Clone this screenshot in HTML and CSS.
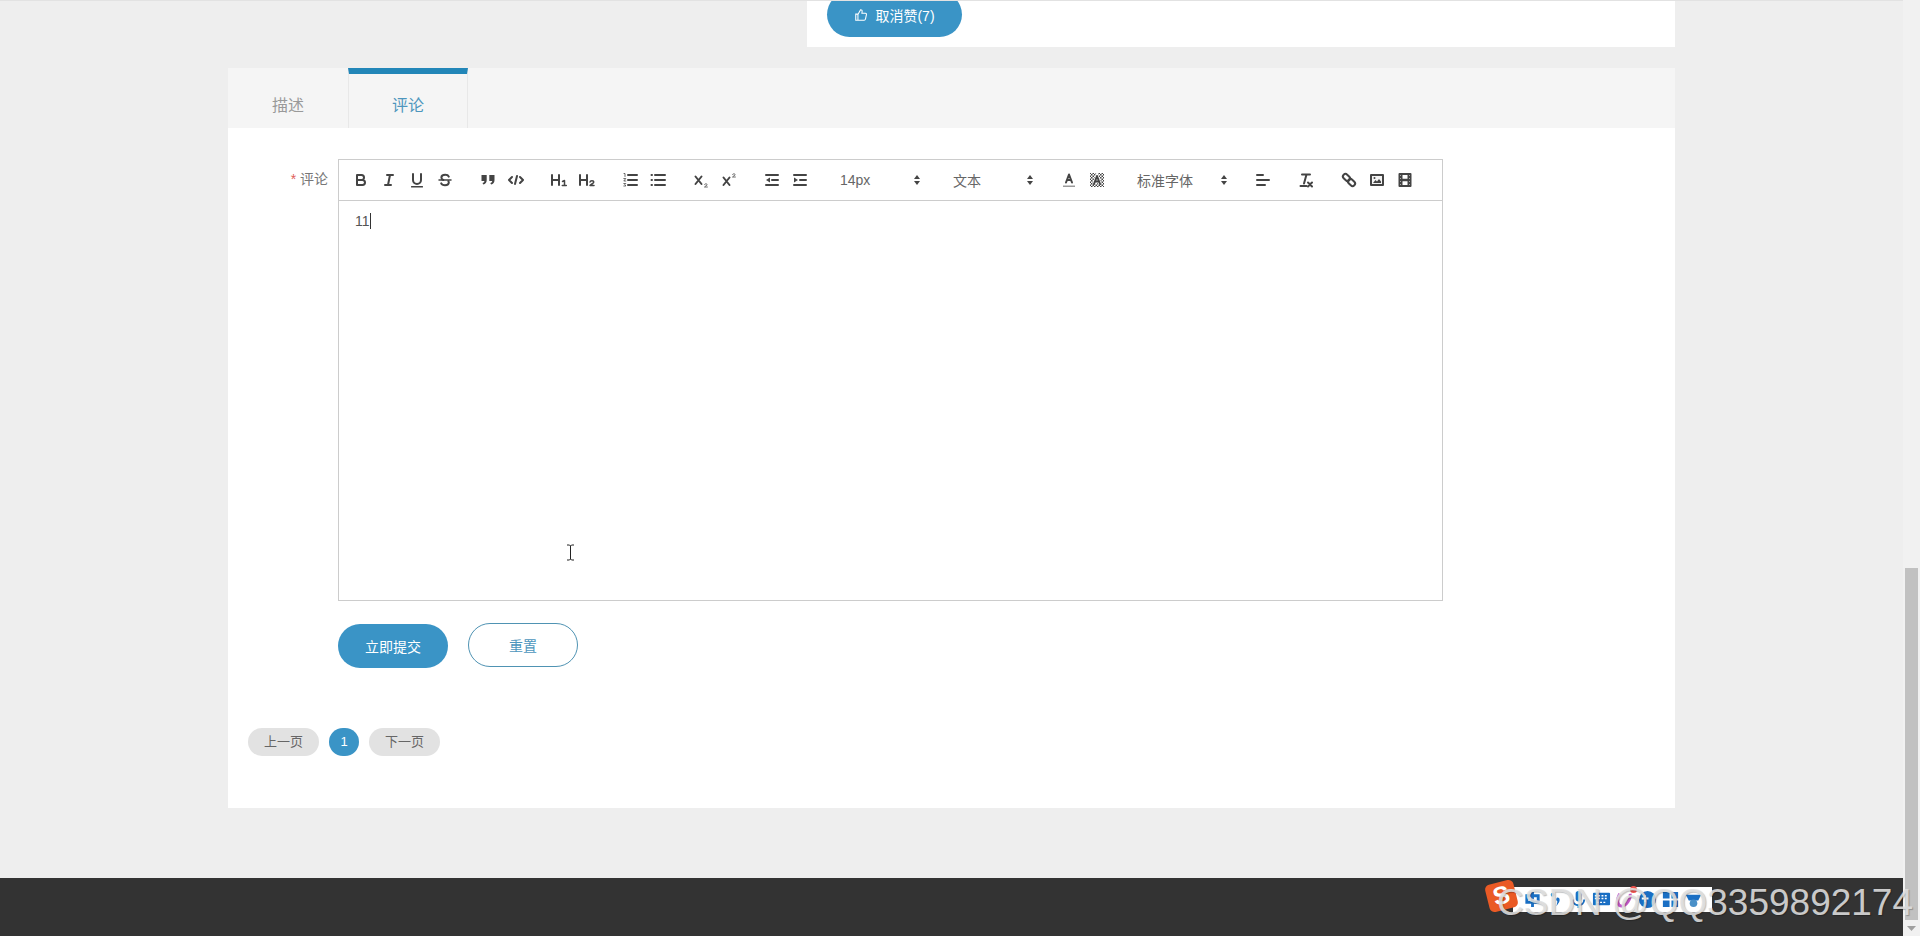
FILE: index.html
```html
<!DOCTYPE html>
<html>
<head>
    <title>评论</title>
    <link rel="stylesheet" href="styles.css">
</head>
<body>
    <div class="page">
        <div class="main">
            <div class="content">
                <div class="wrap">
                    <div class="like-panel">
                        <button class="like-btn">
                            <svg class="like-icon" viewBox="0 0 16 16" width="14" height="14"><path d="M2 7h2.500v7H2zM4.500 7.500 7.500 2c1.200 0 2 .8 1.800 2L9 6h4c.9 0 1.400.7 1.200 1.600l-1.100 5.200c-.2.8-.7 1.200-1.500 1.200H4.500"/></svg>
                            取消赞(7)
                        </button>
                    </div>

                    <div class="tabs-panel">
                        <div class="tab-bar">
                            <div class="tab">描述</div>
                            <div class="tab tab-active">评论</div>
                        </div>
                        <div class="tab-body">
                            <div class="form-row">
                                <label class="form-label"><span class="star">*</span> 评论</label>
                                <div class="editor">
                                    <div class="toolbar">
                                        <span class="group">
                                            <span class="tool"><svg viewBox="0 0 18 18"><path class="st" d="M5 4h4.500a2.500 2.500 0 0 1 0 5H5zM5 9h5.500a2.500 2.500 0 0 1 0 5H5z"/></svg></span>
                                            <span class="tool"><svg viewBox="0 0 18 18"><path class="st" d="M7 4h6M5 14h6M8 14l2-10"/></svg></span>
                                            <span class="tool"><svg viewBox="0 0 18 18"><path class="st" d="M5 3v6a4 4 0 0 0 8 0V3"/><rect class="fi" x="3" y="15" width="12" height="1.400" rx=".5"/></svg></span>
                                            <span class="tool"><svg viewBox="0 0 18 18"><path class="st1" d="M3 9h12"/><path class="st" d="M12.800 5.600C12.300 4.400 11 3.800 9.200 3.800 7 3.800 5.400 4.800 5.400 6.500c0 1.200.7 2 1.900 2.500M5.200 12.400c.5 1.200 1.900 1.800 3.800 1.800 2.200 0 3.800-1 3.800-2.700 0-.6-.2-1.100-.5-1.500"/></svg></span>
                                        </span>
                                        <span class="group">
                                            <span class="tool"><svg viewBox="0 0 18 18"><path class="fi" d="M2.500 4h5.200v5.200c0 2.200-1.200 3.800-3.400 4.400l-.8-1.500c1.200-.5 1.800-1.200 1.900-2.100H2.500zM10.300 4h5.200v5.200c0 2.200-1.200 3.800-3.400 4.400l-.8-1.500c1.200-.5 1.800-1.200 1.900-2.100h-2.900z"/></svg></span>
                                            <span class="tool"><svg viewBox="0 0 18 18"><path class="st" d="M5 6 2 9l3 3M13 6l3 3-3 3M10 5 8 13"/></svg></span>
                                        </span>
                                        <span class="group">
                                            <span class="tool"><svg viewBox="0 0 18 18"><path class="st" d="M2 4v10M9 4v10M2 9h7"/><path class="st1" d="M12.500 10.500 14.500 9.500v5M12.300 14.500h4"/></svg></span>
                                            <span class="tool"><svg viewBox="0 0 18 18"><path class="st" d="M2 4v10M9 4v10M2 9h7"/><path class="st1" d="M12 11c.3-1.800 3.800-1.800 3.800.1 0 1.400-2.800 2-3.800 3.400h4"/></svg></span>
                                        </span>
                                        <span class="group">
                                            <span class="tool"><svg viewBox="0 0 18 18"><path class="st" d="M7 4h9M7 9h9M7 14h9"/><path class="st05" d="M3 2.500h1v3M2.800 7.500h2l-2 2.500h2M2.800 12.500h2l-1 1 1 1.500h-2"/></svg></span>
                                            <span class="tool"><svg viewBox="0 0 18 18"><path class="st" d="M6 4h10M6 9h10M6 14h10M2.500 4h.5M2.500 9h.5M2.500 14h.5"/></svg></span>
                                        </span>
                                        <span class="group">
                                            <span class="tool"><svg viewBox="0 0 18 18"><path class="st" d="m3.500 5.500 6 7.500M9.500 5.500l-6 7.500"/><path class="st05" d="M12.500 13.500c.2-1 2.600-1 2.600.2 0 1-1.800 1.200-2.600 2.300h2.900"/></svg></span>
                                            <span class="tool"><svg viewBox="0 0 18 18"><path class="st" d="m3.500 6.500 6 7.500M9.500 6.500l-6 7.500"/><path class="st05" d="M12.500 3.500c.2-1 2.600-1 2.600.2 0 1-1.800 1.200-2.600 2.300h2.900"/></svg></span>
                                        </span>
                                        <span class="group">
                                            <span class="tool"><svg viewBox="0 0 18 18"><path class="st" d="M3 4h12M9 9h6M3 14h12"/><path class="fi" d="M7 6.500v5L3 9z"/></svg></span>
                                            <span class="tool"><svg viewBox="0 0 18 18"><path class="st" d="M3 4h12M9 9h6M3 14h12"/><path class="fi" d="M3 6.500v5L7 9z"/></svg></span>
                                        </span>
                                        <span class="group">
                                            <span class="picker">14px<svg class="updown" viewBox="0 0 8 12"><path d="M4 1 7 5H1zM4 11 1 7h6z"/></svg></span>
                                        </span>
                                        <span class="group">
                                            <span class="picker">文本<svg class="updown" viewBox="0 0 8 12"><path d="M4 1 7 5H1zM4 11 1 7h6z"/></svg></span>
                                        </span>
                                        <span class="group">
                                            <span class="tool"><svg viewBox="0 0 18 18"><path class="st" d="M6 11.500 9 3.500l3 8M7 9h4"/><rect x="3" y="14.500" width="12" height="1.500" fill="#999"/></svg></span>
                                            <span class="tool"><svg viewBox="0 0 18 18"><defs><pattern id="hatch" width="3" height="3" patternUnits="userSpaceOnUse"><rect width="1.500" height="1.500" fill="#444"/><rect x="1.500" y="1.500" width="1.500" height="1.500" fill="#444"/></pattern></defs><rect x="2" y="2" width="14" height="14" fill="url(#hatch)"/><path d="M6 13 9 5l3 8M7 10.500h4" fill="none" stroke="#fff" stroke-width="3.500"/><path class="st" d="M6 13 9 5l3 8M7 10.500h4"/></svg></span>
                                        </span>
                                        <span class="group">
                                            <span class="picker picker-wide">标准字体<svg class="updown" viewBox="0 0 8 12"><path d="M4 1 7 5H1zM4 11 1 7h6z"/></svg></span>
                                        </span>
                                        <span class="group">
                                            <span class="tool"><svg viewBox="0 0 18 18"><path class="st" d="M3 4h6M3 9h12M3 14h8"/></svg></span>
                                        </span>
                                        <span class="group">
                                            <span class="tool"><svg viewBox="0 0 18 18"><path class="st" d="M5 3.500h8M9.500 3.500 7 12.500M3.500 15h6"/><path class="st" d="m11 11.500 4 4M15 11.500l-4 4"/></svg></span>
                                        </span>
                                        <span class="group">
                                            <span class="tool"><svg viewBox="0 0 18 18"><rect class="st" x="2.500" y="4" width="8" height="5" rx="2.500" transform="rotate(45 6.500 6.500)"/><rect class="st" x="7.500" y="9" width="8" height="5" rx="2.500" transform="rotate(45 11.500 11.500)"/></svg></span>
                                            <span class="tool"><svg viewBox="0 0 18 18"><rect class="fi" x="2" y="3" width="14" height="12" rx="1"/><rect x="4" y="5" width="10" height="8" fill="#f4f4f4"/><path class="fi" d="M5 12l2.500-3 1.500 1.500 2-2.500 2 2.500V12z"/><circle class="fi" cx="6.500" cy="7" r="1"/></svg></span>
                                            <span class="tool"><svg viewBox="0 0 18 18"><rect class="fi" x="2.500" y="2" width="13" height="14" rx="1"/><path d="M6.500 4h5v3.800h-5zM6.500 10.200h5V14h-5z" fill="#fff"/><path d="M4 4.500h1M4 7.500h1M4 10.500h1M4 13.500h1M13 4.500h1M13 7.500h1M13 10.500h1M13 13.500h1" stroke="#aaa"/></svg></span>
                                        </span>
                                    </div>
                                    <div class="editor-area"><span class="typed">11</span><span class="caret"></span></div>
                                </div>
                            </div>
                            <div class="form-actions">
                                <button class="btn btn-primary">立即提交</button>
                                <button class="btn btn-plain">重置</button>
                            </div>
                            <div class="pager">
                                <a class="page-link">上一页</a>
                                <a class="page-num">1</a>
                                <a class="page-link">下一页</a>
                            </div>
                        </div>
                    </div>
                </div>
            </div>

            <div class="footer">
                <div class="ime">
                    <span class="ime-logo">S</span>
                    <div class="ime-bar">
                        <svg viewBox="0 0 20 20"><path d="M4 6h12v7H4zM10 2v16" fill="none" stroke="#1a6fc4" stroke-width="3"/></svg>
                        <svg viewBox="0 0 20 20"><circle cx="7" cy="5" r="2" fill="#1a6fc4"/><path d="M12 8c3 0 3 4 1 6l-2 3 1-5c-2-1-1-4 0-4z" fill="#1a6fc4"/></svg>
                        <svg viewBox="0 0 20 20"><rect x="7" y="1" width="6" height="11" rx="3" fill="#1a6fc4"/><path d="M4 10c0 8 12 8 12 0M10 15v4" fill="none" stroke="#1a6fc4" stroke-width="2"/></svg>
                        <svg viewBox="0 0 20 20"><rect x="1" y="3" width="18" height="13" rx="1" fill="#1a6fc4"/><path d="M3 6h14M3 9h14M5 13h10" stroke="#fff" stroke-width="1.500" stroke-dasharray="2 1.500"/></svg>
                        <svg viewBox="0 0 20 20"><path d="M5 4c-4 6-2 13 2 13 5 0 10-8 9-13" fill="none" stroke="#c45ac9" stroke-width="3"/></svg>
                        <svg viewBox="0 0 20 20"><circle cx="10" cy="10" r="9" fill="#1a6fc4"/><path d="M4 9h7M7.500 5.500v7" stroke="#fff" stroke-width="2"/></svg>
                        <svg viewBox="0 0 20 20"><path d="M2 2h7v7H2zM11 2h7v7h-7zM2 11h7v7H2zM11 11h7v7h-7z" fill="#1a6fc4"/></svg>
                        <svg viewBox="0 0 20 20"><path d="M2 5h16l-3 6H5z" fill="#1a6fc4"/><circle cx="10" cy="14" r="4" fill="#4a90c8"/></svg>
                    </div>
                    <span class="ime-dot"></span>
                </div>
                <div class="watermark">CSDN @QQ3359892174</div>
            </div>
        </div>

        <div class="scrollbar">
            <div class="scroll-thumb"></div>
            <svg class="scroll-arrow" viewBox="0 0 9 5" width="9" height="5"><path d="M0 0h9L4.500 5z"/></svg>
        </div>
    </div>

    <svg class="ibeam" viewBox="0 0 9 17" width="9" height="17"><path d="M1 1h2.500l1 1 1-1H8M4.500 2v13M1 16h2.500l1-1 1 1H8" fill="none" stroke="#222" stroke-width="1"/></svg>
</body>
</html>
```

FILE: styles.css
```css
* {
    box-sizing: border-box;
}

html,
body {
    margin: 0;
    height: 100%;
    overflow: hidden;
}

body {
    font-family: "Liberation Sans", "Noto Sans CJK SC", sans-serif;
    font-size: 14px;
    color: #444;
    background-color: #eeeeee;
}

.page {
    display: flex;
    height: 936px;
}

.main {
    flex: 1;
    display: flex;
    flex-direction: column;
    min-width: 0;
}

.content {
    flex: 1;
    border-top: 1px solid #e2e2e2;
}

.wrap {
    width: 1447px;
    margin: 0 auto;
}

/* like panel, cut by the scroll position */
.like-panel {
    width: 868px;
    height: 46px;
    margin-left: auto;
    padding-left: 20px;
    background-color: #fff;
    overflow: hidden;
}

.like-btn {
    display: flex;
    align-items: center;
    justify-content: center;
    gap: 7px;
    width: 135px;
    height: 45px;
    margin-top: -9px;
    border: none;
    border-radius: 23px;
    background-color: #3a94c6;
    color: #fff;
    font-family: inherit;
    font-size: 14px;
}

.like-icon {
    fill: none;
    stroke: #fff;
    stroke-width: 1.2;
}

/* tabs */
.tabs-panel {
    margin-top: 21px;
    background-color: #fff;
}

.tab-bar {
    display: flex;
    height: 60px;
    background-color: #f5f5f5;
}

.tab {
    width: 120px;
    padding-top: 21px;
    text-align: center;
    line-height: 34px;
    font-size: 16px;
    color: #999;
}

.tab-active {
    border-top: 6px solid #2286b8;
    border-left: 1px solid #e8e8e8;
    border-right: 1px solid #e8e8e8;
    padding-top: 15px;
    color: #4d96bd;
}

.tab-body {
    height: 680px;
    padding: 31px 0 0 20px;
}

/* form */
.form-row {
    display: flex;
}

.form-label {
    width: 90px;
    padding: 11px 10px 0 0;
    text-align: right;
    line-height: 18px;
    color: #777;
}

.star {
    color: #e0605a;
}

.editor {
    width: 1105px;
    height: 442px;
    border: 1px solid #ccc;
}

.toolbar {
    display: flex;
    align-items: center;
    gap: 15px;
    height: 41px;
    padding-left: 8px;
    border-bottom: 1px solid #ccc;
}

.group {
    display: flex;
    align-items: center;
}

.tool {
    display: flex;
    align-items: center;
    justify-content: center;
    width: 28px;
    height: 24px;
}

.tool svg {
    width: 18px;
    height: 18px;
}

.st,
.st1,
.st05 {
    fill: none;
    stroke: #444;
    stroke-linecap: round;
    stroke-linejoin: round;
}

.st {
    stroke-width: 2;
}

.st1 {
    stroke-width: 1.5;
}

.st05 {
    stroke-width: .8;
}

.fi {
    fill: #444;
}

.picker {
    display: flex;
    align-items: center;
    justify-content: space-between;
    width: 98px;
    padding: 0 6px 0 11px;
    color: #666;
}

.picker-wide {
    width: 108px;
}

.updown {
    width: 8px;
    height: 12px;
    fill: #444;
}

.editor-area {
    display: flex;
    align-items: center;
    height: 18px;
    margin-top: 11px;
    padding-left: 16px;
    line-height: 18px;
    color: #555;
}

.caret {
    width: 1px;
    height: 16px;
    background-color: #333;
}

.form-actions {
    display: flex;
    gap: 20px;
    margin-top: 23px;
    margin-left: 90px;
}

.btn {
    width: 110px;
    height: 44px;
    padding-bottom: 2px;
    border-radius: 22px;
    font-family: inherit;
    font-size: 14px;
}

.btn-primary {
    border: none;
    background-color: #3a94c6;
    color: #fff;
}

.btn-plain {
    margin-top: -1px;
    border: 1px solid #4f93b3;
    background-color: #fff;
    color: #4d96bd;
}

/* pagination */
.pager {
    display: flex;
    gap: 10px;
    margin-top: 60px;
}

.page-link {
    width: 71px;
    height: 28px;
    border-radius: 14px;
    background-color: #e2e2e2;
    text-align: center;
    line-height: 28px;
    font-size: 13px;
    color: #666;
}

.page-num {
    width: 30px;
    height: 28px;
    border-radius: 14px;
    background-color: #3a94c6;
    text-align: center;
    line-height: 28px;
    font-size: 13px;
    color: #fff;
}

/* footer */
.footer {
    position: relative;
    height: 58px;
    background-color: #333;
}

.ime {
    position: absolute;
    left: 1487px;
    top: 4px;
    display: flex;
    align-items: center;
    height: 30px;
}

.ime-logo {
    position: absolute;
    left: 0;
    top: 0;
    z-index: 1;
    width: 29px;
    height: 28px;
    border-radius: 5px;
    background-color: #ea5a25;
    transform: rotate(-14deg);
    text-align: center;
    line-height: 27px;
    font-size: 25px;
    font-weight: bold;
    color: #fff;
}

.ime-bar {
    display: flex;
    align-items: center;
    gap: 4px;
    width: 199px;
    height: 25px;
    margin-top: 5px;
    margin-left: 26px;
    padding-left: 10px;
    background-color: #fff;
}

.ime-bar svg {
    width: 19px;
    height: 19px;
}

.ime-dot {
    position: absolute;
    left: 143px;
    top: 4px;
    width: 7px;
    height: 7px;
    border-radius: 50%;
    background-color: #f0544f;
}

.watermark {
    position: absolute;
    z-index: 2;
    left: 1497px;
    top: 4px;
    white-space: nowrap;
    line-height: 42px;
    font-size: 37px;
    color: rgba(225, 225, 225, 0.88);
    text-shadow: 1px 1px 1px rgba(0, 0, 0, 0.25);
}

/* scrollbar */
.scrollbar {
    position: relative;
    width: 17px;
    background-color: #f1f1f1;
}

.scroll-thumb {
    position: absolute;
    left: 2px;
    top: 568px;
    width: 13px;
    height: 352px;
    background-color: #c1c1c1;
}

.scroll-arrow {
    position: absolute;
    left: 4px;
    top: 926px;
    fill: #a0a0a0;
}

.ibeam {
    position: absolute;
    left: 566px;
    top: 544px;
}
```
